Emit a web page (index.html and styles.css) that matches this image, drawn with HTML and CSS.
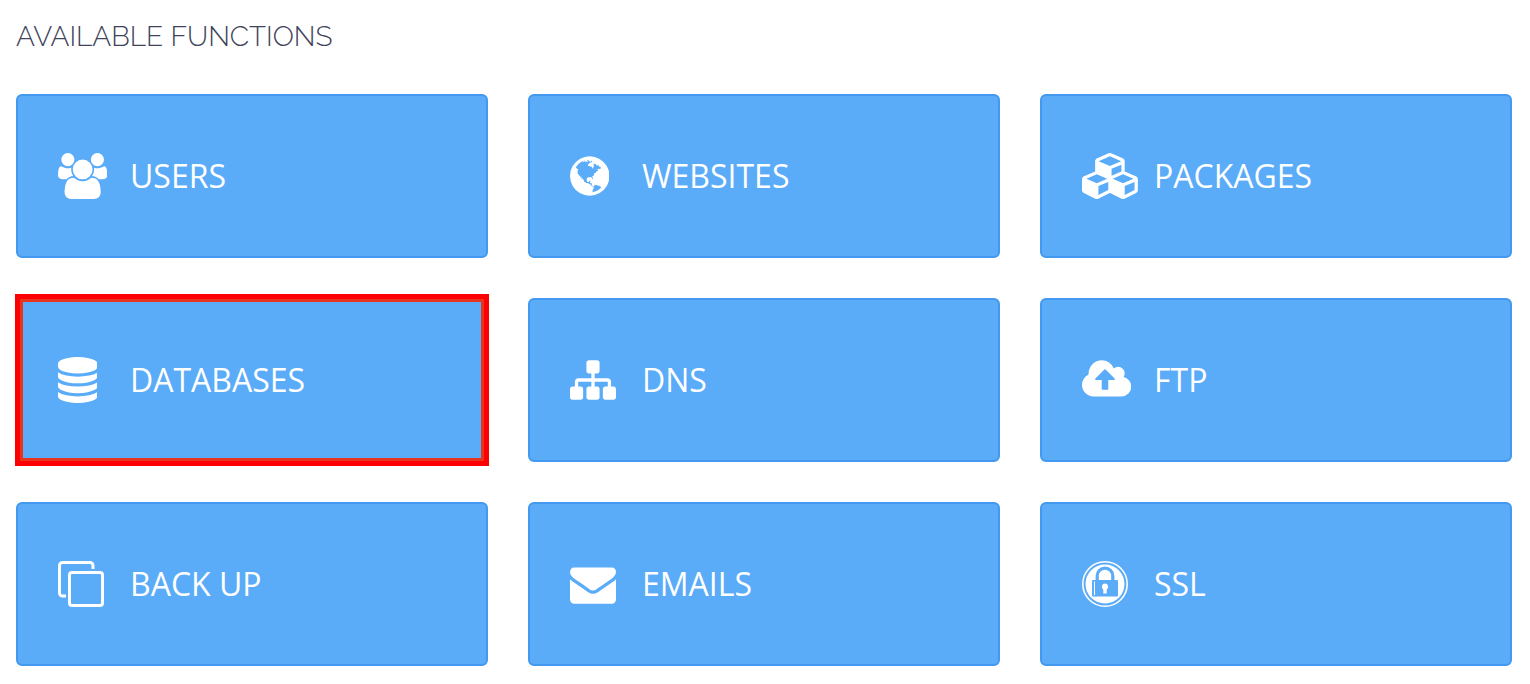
FILE: index.html
```html
<!DOCTYPE html>
<html lang="en">
<head>
<meta charset="utf-8">
<meta name="viewport" content="width=device-width, initial-scale=1">
<title>Available functions</title>
<link rel="stylesheet" href="styles.css">
</head>
<body>
<main class="panel">
<h1 class="panel-title">AVAILABLE FUNCTIONS</h1>
<nav class="tiles" aria-label="Available functions">
<a class="tile" href="#users">
<span class="tile-icon"><svg class="icon" viewBox="0 0 1920 1792" aria-hidden="true"><path d="M593 896q-162 5-265 128h-134q-82 0-138-40.500t-56-118.500q0-353 124-353 6 0 43.500 21t97.500 42.500 119 21.500q67 0 133-23-5 37-5 66 0 139 81 256zm1071 637q0 120-73 189.500t-194 69.500h-874q-121 0-194-69.500t-73-189.500q0-53 3.500-103.500t14-109 26.500-108.500 43-97.500 62-81 85.500-53.500 111.500-20q10 0 43 21.500t73 48 107 48 135 21.500 135-21.500 107-48 73-48 43-21.500q61 0 111.500 20t85.500 53.500 62 81 43 97.500 26.500 108.500 14 109 3.500 103.500zm-1024-1277q0 106-75 181t-181 75-181-75-75-181 75-181 181-75 181 75 75 181zm704 384q0 159-112.500 271.500t-271.500 112.500-271.500-112.500-112.500-271.500 112.500-271.500 271.500-112.500 271.500 112.500 112.500 271.500zm576 225q0 78-56 118.500t-138 40.500h-134q-103-123-265-128 81-117 81-256 0-29-5-66 66 23 133 23 59 0 119-21.500t97.500-42.500 43.500-21q124 0 124 353zm-128-609q0 106-75 181t-181 75-181-75-75-181 75-181 181-75 181 75 75 181z"/></svg></span>
<span class="tile-label">USERS</span>
</a>
<a class="tile" href="#websites">
<span class="tile-icon"><svg class="icon" viewBox="0 0 1536 1792" aria-hidden="true"><path d="M768 128q209 0 385.500 103t279.500 279.500 103 385.500-103 385.500-279.500 279.500-385.500 103-385.500-103-279.500-279.500-103-385.500 103-385.500 279.500-279.500 385.500-103zm274 521q-2 1-9.500 9.500t-13.500 9.500q2 0 4.500-5t5-11 3.500-7q6-7 22-15 14-6 52-12 34-8 51 11-2-2 9.500-13t14.500-12q3-2 15-4.500t15-7.500l2-22q-12 1-17.500-7t-6.500-21q0 2-6 8 0-7-4.500-8t-11.500 1-9 1q-10-3-15-7.500t-8-16.500-4-15q-2-5-9.500-10.500t-9.500-10.500q-1-2-2.500-5.500t-3-6.500-4-5.500-5.500-2.500-7 5-7.500 10-4.500 5q-3-2-6-1.500t-4.500 1-4.500 3-5 3.500q-3 2-8.500 3t-8.500 2q15-5-1-11-10-4-16-3 9-4 7.500-12t-8.500-14h5q-1-4-8.500-8.500t-17.500-8.500-13-6q-8-5-34-9.500t-33-.5q-5 6-4.500 10.500t4 14 3.500 12.500q1 6-5.500 13t-6.500 12q0 7 14 15.500t10 21.500q-3 8-16 16t-16 12q-5 8-1.500 18.500t10.500 16.500q2 2 1.500 4t-3.500 4.500-5.500 4-6.500 3.500l-3 2q-11 5-20.500-6t-13.500-26q-7-25-16-30-23-8-29 1-5-13-41-26-25-9-58-4 6-1 0-15-7-15-19-12 3-6 4-17.500t1-13.500q3-13 12-23 1-1 7-8.500t9.500-13.500.5-6q35 4 50-11 5-5 11.500-17t10.500-17q9-6 14-5.500t14.500 5.500 14.500 5q14 1 15.500-11t-7.500-20q12 1 3-17-4-7-8-9-12-4-27 5-8 4 2 8-1-1-9.500 10.500t-16.500 17.500-16-5q-1-1-5.500-13.500t-9.500-13.500q-8 0-16 15 3-8-11-15t-24-8q19-12-8-27-7-4-20.500-5t-19.500 4q-5 7-5.500 11.500t5 8 10.500 5.500 11.500 4 8.500 3q14 10 8 14-2 1-8.500 3.500t-11.500 4.500-6 4q-3 4 0 14t-2 14q-5-5-9-17.500t-7-16.500q7 9-25 6l-10-1q-4 0-16 2t-20.500 1-13.500-8q-4-8 0-20 1-4 4-2-4-3-11-9.500t-10-8.500q-46 15-94 41 6 1 12-1 5-2 13-6.500t10-5.500q34-14 42-7l5-5q14 16 20 25-7-4-30-1-20 6-22 12 7 12 5 18-4-3-11.500-10t-14.500-11-15-5q-16 0-22 1-146 80-235 222 7 7 12 8 4 1 5 9t2.500 11 11.500-3q9 8 3 19 1-1 44 27 19 17 21 21 3 11-10 18-1-2-9-9t-9-4q-3 5 .5 18.500t10.500 12.500q-7 0-9.500 16t-2.500 35.500-1 23.500l2 1q-3 12 5.500 34.500t21.500 19.500q-13 3 20 43 6 8 8 9 3 2 12 7.500t15 10 10 10.500q4 5 10 22.500t14 23.500q-2 6 9.500 20t10.500 23q-1 0-2.500 1t-2.500 1q3 7 15.500 14t15.500 13q1 3 2 10t3 11 8 2q2-20-24-62-15-25-17-29-3-5-5.500-15.500t-4.500-14.500q2 0 6 1.500t8.500 3.500 7.500 4 2 3q-3 7 2 17.500t12 18.500 17 19 12 13q6 6 14 19.500t0 13.500q9 0 20 10t17 20q5 8 8 26t5 24q2 7 8.500 13.500t12.500 9.500l16 8 13 7q5 2 18.500 10.500t21.500 11.500q10 4 16 4t14.500-2.500 13.500-3.500q15-2 29 15t21 21q36 19 55 11-2 1 .5 7.500t8 15.500 9 14.500 5.500 8.500q5 6 18 15t18 15q6-4 7-9-3 8 7 20t18 10q14-3 14-32-31 15-49-18 0-1-2.500-5.500t-4-8.500-2.500-8.500 0-7.500 5-3q9 0 10-3.500t-2-12.500-4-13q-1-8-11-20t-12-15q-5 9-16 8t-16-9q0 1-1.500 5.500t-1.500 6.500q-13 0-15-1 1-3 2.500-17.500t3.500-22.500q1-4 5.500-12t7.500-14.500 4-12.500-4.500-9.500-17.500-2.500q-19 1-26 20-1 3-3 10.500t-5 11.500-9 7q-7 3-24 2t-24-5q-13-8-22.500-29t-9.500-37q0-10 2.500-26.500t3-25-5.500-24.500q3-2 9-9.500t10-10.500q2-1 4.500-1.500t4.500 0 4-1.500 3-6q-1-1-4-3-3-3-4-3 7 3 28.500-1.500t27.500 1.500q15 11 22-2 0-1-2.500-9.500t-.5-13.500q5 27 29 9 3 3 15.500 5t17.500 5q3 2 7 5.500t5.500 4.500 5-.5 8.500-6.500q10 14 12 24 11 40 19 44 7 3 11 2t4.500-9.500 0-14-1.500-12.500l-1-8v-18l-1-8q-15-3-18.500-12t1.500-18.500 15-18.500q1-1 8-3.500t15.500-6.500 12.500-8q21-19 15-35 7 0 11-9-1 0-5-3t-7.500-5-4.500-2q9-5 2-16 5-3 7.500-11t7.500-10q9 12 21 2 8-8 1-16 5-7 20.500-10.500t18.500-9.500q7 2 8-2t1-12 3-12q4-5 15-9t13-5l17-11q3-4 0-4 18 2 31-11 10-11-6-20 3-6-3-9.500t-15-5.500q3-1 11.500-.5t10.500-1.500q15-10-7-16-17-5-43 12zm-163 877q206-36 351-189-3-3-12.500-4.500t-12.500-3.500q-18-7-24-8 1-7-2.500-13t-8-9-12.500-8-11-7q-2-2-7-6t-7-5.500-7.500-4.500-8.500-2-10 1l-3 1q-3 1-5.500 2.500t-5.500 3-4 3 0 2.500q-21-17-36-22-5-1-11-5.500t-10.500-7-10-1.500-11.500 7q-5 5-6 15t-2 13q-7-5 0-17.500t2-18.500q-3-6-10.500-4.500t-12 4.500-11.500 8.500-9 6.500-8.500 5.500-8.500 7.500q-3 4-6 12t-5 11q-2-4-11.500-6.500t-9.500-5.500q2 10 4 35t5 38q7 31-12 48-27 25-29 40-4 22 12 26 0 7-8 20.500t-7 21.500q0 6 2 16z"/></svg></span>
<span class="tile-label">WEBSITES</span>
</a>
<a class="tile" href="#packages">
<span class="tile-icon"><svg class="icon" viewBox="0 0 2176 1792" aria-hidden="true"><path d="M640 1632l384-192v-314l-384 164v342zm-64-454l404-173-404-173-404 173zm1088 454l384-192v-314l-384 164v342zm-64-454l404-173-404-173-404 173zm-448-293l384-165v-266l-384 164v267zm-64-379l441-189-441-189-441 189zm1088 518v416q0 36-19 67t-52 47l-448 224q-25 14-57 14t-57-14l-448-224q-4-2-7-4-2 2-7 4l-448 224q-25 14-57 14t-57-14l-448-224q-33-16-52-47t-19-67v-416q0-38 21.500-70t56.500-48l434-186v-400q0-38 21.500-70t56.500-48l448-192q23-10 50-10t50 10l448 192q35 16 56.500 48t21.500 70v400l434 186q36 16 57 48t21 70z" fill-rule="evenodd"/></svg></span>
<span class="tile-label">PACKAGES</span>
</a>
<a class="tile tile-highlighted" href="#databases">
<span class="tile-icon"><svg class="icon" viewBox="128 0 1536 1792" aria-hidden="true"><path d="M896 768q237 0 443-43t325-127v170q0 69-103 128t-280 93.500-385 34.500-385-34.500-280-93.500-103-128v-170q119 84 325 127t443 43zm0 768q237 0 443-43t325-127v170q0 69-103 128t-280 93.500-385 34.500-385-34.500-280-93.500-103-128v-170q119 84 325 127t443 43zm0-384q237 0 443-43t325-127v170q0 69-103 128t-280 93.500-385 34.500-385-34.500-280-93.500-103-128v-170q119 84 325 127t443 43zm0-1152q208 0 385 34.500t280 93.500 103 128v128q0 69-103 128t-280 93.500-385 34.500-385-34.500-280-93.500-103-128v-128q0-69 103-128t280-93.500 385-34.500z"/></svg></span>
<span class="tile-label">DATABASES</span>
</a>
<a class="tile" href="#dns">
<span class="tile-icon"><svg class="icon" viewBox="0 0 1792 1792" aria-hidden="true"><path d="M1792 1248v320q0 40-28 68t-68 28h-320q-40 0-68-28t-28-68v-320q0-40 28-68t68-28h96v-192h-512v192h96q40 0 68 28t28 68v320q0 40-28 68t-68 28h-320q-40 0-68-28t-28-68v-320q0-40 28-68t68-28h96v-192h-512v192h96q40 0 68 28t28 68v320q0 40-28 68t-68 28h-320q-40 0-68-28t-28-68v-320q0-40 28-68t68-28h96v-192q0-52 38-90t90-38h512v-192h-96q-40 0-68-28t-28-68v-320q0-40 28-68t68-28h320q40 0 68 28t28 68v320q0 40-28 68t-68 28h-96v192h512q52 0 90 38t38 90v192h96q40 0 68 28t28 68z"/></svg></span>
<span class="tile-label">DNS</span>
</a>
<a class="tile" href="#ftp">
<span class="tile-icon"><svg class="icon" viewBox="0 0 1920 1792" aria-hidden="true"><path d="M1280 864q0-14-9-23l-352-352q-9-9-23-9t-23 9l-351 351q-10 12-10 24 0 14 9 23t23 9h224v352q0 13 9.500 22.500t22.500 9.500h192q13 0 22.500-9.500t9.500-22.500v-352h224q13 0 22.500-9.500t9.500-22.500zm640 288q0 159-112.500 271.500t-271.500 112.500h-1088q-185 0-316.500-131.500t-131.500-316.500q0-130 70-240t188-165q-2-30-2-43 0-212 150-362t362-150q156 0 285.500 87t188.500 231q71-62 166-62 106 0 181 75t75 181q0 76-41 138 130 31 213.500 135.500t83.500 238.500z"/></svg></span>
<span class="tile-label">FTP</span>
</a>
<a class="tile" href="#backup">
<span class="tile-icon"><svg class="icon" viewBox="0 0 46 46" aria-hidden="true"><g fill="none" stroke="#fff" stroke-width="3"><path d="M8 35H4.500a3 3 0 0 1-3-3V4.500a3 3 0 0 1 3-3H32a3 3 0 0 1 3 3V8"/><rect x="11.500" y="11.500" width="33" height="33" rx="2.500"/></g></svg></span>
<span class="tile-label">BACK UP</span>
</a>
<a class="tile" href="#emails">
<span class="tile-icon"><svg class="icon" viewBox="0 0 1792 1792" aria-hidden="true"><path d="M1792 710v794q0 66-47 113t-113 47h-1472q-66 0-113-47t-47-113v-794q44 49 101 87 362 246 497 345 57 42 92.500 65.500t94.500 48 110 24.500h2q51 0 110-24.500t94.500-48 92.500-65.500q170-123 498-345 57-39 100-87zm0-294q0 79-49 151t-122 123q-376 261-468 325-10 7-42.500 31t-54 38.500-52 32.500-57.500 27-50 9h-2q-23 0-50-9t-57.500-27-52-32.500-54-38.500-42.500-31q-91-64-262-182.500t-205-142.500q-62-42-117-115.500t-55-136.500q0-78 41.500-130t118.500-52h1472q65 0 112.500 47t47.500 113z"/></svg></span>
<span class="tile-label">EMAILS</span>
</a>
<a class="tile" href="#ssl">
<span class="tile-icon"><svg class="icon" viewBox="0 0 46 46" aria-hidden="true"><circle cx="23" cy="23" r="22.200" fill="none" stroke="#fff" stroke-width="1.600"/><circle cx="23" cy="23" r="19.500"/><path d="M15.200 20v-5a7.800 7.800 0 0 1 15.600 0v5" fill="none" stroke="#5aabf8" stroke-width="3.200"/><rect x="10" y="19" width="26" height="16.500" rx="1" fill="#5aabf8"/><path d="M12.500 20.500v13.500" stroke="#fff" stroke-width="1"/><path d="M23 22.500a3.200 3.200 0 0 1 1.700 5.900V32.500h-3.400V28.400A3.200 3.200 0 0 1 23 22.500z"/></svg></span>
<span class="tile-label">SSL</span>
</a>
</nav>
</main>
</body>
</html>
```
FILE: styles.css
```css
* {
  box-sizing: border-box;
}

body {
  margin: 0;
  background: #fff;
  font-family: "Open Sans", "Noto Sans", sans-serif;
}

.panel {
  padding: 16px 18px 18px 16px;
}

.panel-title {
  margin: 0 0 36px;
  color: #40445a;
  font-family: Raleway, Lato, sans-serif;
  font-size: 28px;
  font-weight: 300;
  line-height: 42px;
}

.tiles {
  display: grid;
  grid-template-columns: repeat(3, 1fr);
  gap: 40px;
}

.tile {
  position: relative;
  display: flex;
  align-items: center;
  padding: 56px 40px;
  border: 2px solid #4399f0;
  border-radius: 6px;
  background: #5aabf8;
  color: #fff;
  text-decoration: none;
}

.tile-icon {
  display: flex;
  flex: 0 0 72px;
}

.icon {
  display: block;
  width: auto;
  height: 46px;
  fill: #fff;
}

.tile-label {
  font-size: 32px;
  line-height: 48px;
}

.tile-highlighted::after {
  content: "";
  position: absolute;
  inset: -6px -3px;
  border: 5px solid #f00;
  box-shadow: inset 0 0 0 3px #e8331f;
}
```
